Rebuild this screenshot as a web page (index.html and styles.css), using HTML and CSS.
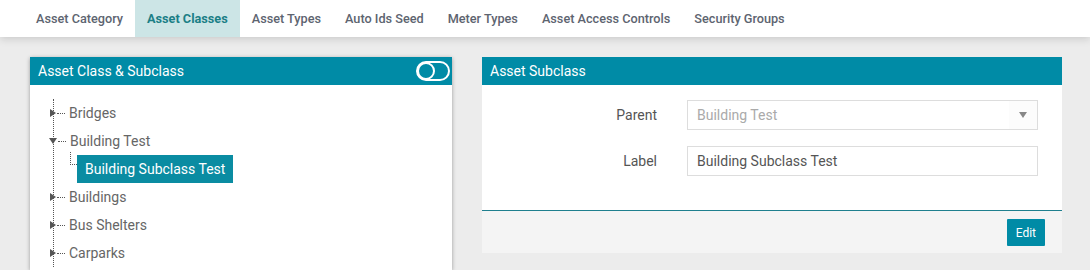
FILE: index.html
```html
<!DOCTYPE html>
<html>
  <head>
    <title>Asset Classes</title>
    <link rel="stylesheet" href="styles.css">
  </head>
  <body>
    <nav class="tabs">
      <a class="tab">Asset Category</a>
      <a class="tab active">Asset Classes</a>
      <a class="tab">Asset Types</a>
      <a class="tab">Auto Ids Seed</a>
      <a class="tab">Meter Types</a>
      <a class="tab">Asset Access Controls</a>
      <a class="tab">Security Groups</a>
    </nav>

    <div class="content">
      <div class="panel tree-panel">
        <div class="panel-head">
          <span>Asset Class &amp; Subclass</span>
          <svg class="toggle" width="34" height="20" viewBox="0 0 34 20">
            <rect x="1" y="1" width="32" height="18" rx="9" fill="none" stroke="#fff" stroke-width="2" />
            <circle cx="10" cy="10" r="8" fill="none" stroke="#fff" stroke-width="2" />
          </svg>
        </div>
        <div class="panel-body">
          <ul class="tree">
            <li><div class="node"><i class="arrow"></i><b class="dash"></b><span class="label">Bridges</span></div></li>
            <li>
              <div class="node"><i class="arrow open"></i><b class="dash"></b><span class="label">Building Test</span></div>
              <ul class="subtree">
                <li><div class="node"><b class="elbow"></b><span class="label selected">Building Subclass Test</span></div></li>
              </ul>
            </li>
            <li><div class="node"><i class="arrow"></i><b class="dash"></b><span class="label">Buildings</span></div></li>
            <li><div class="node"><i class="arrow"></i><b class="dash"></b><span class="label">Bus Shelters</span></div></li>
            <li><div class="node"><i class="arrow"></i><b class="dash"></b><span class="label">Carparks</span></div></li>
          </ul>
        </div>
      </div>

      <div class="panel form-panel">
        <div class="panel-head"><span>Asset Subclass</span></div>
        <div class="panel-body form-body">
          <label class="form-label">Parent</label>
          <div class="select disabled">
            <span>Building Test</span>
            <i class="caret"></i>
          </div>
          <label class="form-label">Label</label>
          <input class="form-input" type="text" value="Building Subclass Test" />
        </div>
        <div class="panel-foot">
          <button>Edit</button>
        </div>
      </div>
    </div>
  </body>
</html>
```

FILE: styles.css
```css
body {
  margin: 0;
  background-color: #ececec;
  font-family: Roboto, "Liberation Sans", sans-serif;
  color: #666;
}
.tabs {
  display: flex;
  height: 37px;
  padding-left: 24px;
  background-color: #fff;
  box-shadow: 0 2px 8px rgba(0, 0, 0, 0.15);
}
.tab {
  display: flex;
  align-items: center;
  padding: 0 12px;
  font-size: 12.7px;
  font-weight: 500;
  color: #5d6470;
}
.tab.active {
  background-color: #cce5e6;
  color: #1b7f86;
  font-weight: 700;
}
.content {
  display: flex;
  align-items: flex-start;
  gap: 30px;
  padding: 20px 0 0 30px;
}
.panel {
  background-color: #fff;
}
.tree-panel {
  width: 422px;
  height: 213px;
  box-shadow: 0 1px 4px rgba(0, 0, 0, 0.35);
}
.form-panel {
  width: 580px;
}
.panel-head {
  display: flex;
  align-items: center;
  justify-content: space-between;
  height: 28px;
  padding: 0 2px 0 8px;
  background-color: #008ba6;
  color: #fff;
  font-size: 14px;
}
.tree {
  list-style: none;
  margin: 14px 0 0 23px;
  padding: 0;
  border-left: 1px dotted #555;
}
.tree li {
  margin: 0;
}
.node {
  display: flex;
  align-items: center;
  height: 28px;
  font-size: 14px;
}
.arrow {
  width: 0;
  height: 0;
  margin-left: -4px;
  border-top: 4px solid transparent;
  border-bottom: 4px solid transparent;
  border-left: 6px solid #555;
}
.arrow.open {
  margin-left: -5px;
  border-left: 4px solid transparent;
  border-right: 4px solid transparent;
  border-top: 6px solid #555;
  border-bottom: 0;
}
.dash {
  width: 8px;
  margin-left: 1px;
  border-top: 1px dotted #555;
}
.label {
  padding-left: 4px;
  color: #666;
}
.subtree {
  list-style: none;
  margin: 0 0 0 16px;
  padding: 0;
}
.elbow {
  align-self: flex-start;
  width: 6px;
  height: 12px;
  margin-top: -3px;
  border-left: 1px dotted #555;
  border-bottom: 1px dotted #555;
}
.label.selected {
  display: flex;
  align-items: center;
  height: 28px;
  padding: 0 8px;
  background-color: #0a8ca2;
  color: #fff;
}
.form-body {
  display: grid;
  grid-template-columns: 175px 1fr;
  column-gap: 30px;
  row-gap: 16px;
  align-items: center;
  padding: 15px 24px 34px 0;
  border-bottom: 1px solid #1f7f8e;
}
.form-label {
  text-align: right;
  font-size: 14px;
  color: #555;
}
.select,
.form-input {
  box-sizing: border-box;
  height: 30px;
  border: 1px solid #ddd;
  font-family: inherit;
  font-size: 14px;
  color: #555;
}
.select {
  display: flex;
  align-items: center;
  justify-content: space-between;
  padding: 0 0 0 9px;
}
.select.disabled {
  color: #aaa;
}
.caret {
  display: flex;
  align-items: center;
  justify-content: center;
  width: 28px;
  height: 28px;
  background-color: #fcfcfc;
}
.caret::before {
  content: "";
  border-left: 4px solid transparent;
  border-right: 4px solid transparent;
  border-top: 6px solid #888;
}
.form-input {
  padding: 0 9px;
  outline: none;
}
.panel-foot {
  display: flex;
  justify-content: flex-end;
  padding: 8px 17px 7px 0;
  background-color: #f4f4f4;
}
button {
  height: 27px;
  padding: 0 9px;
  border: none;
  border-radius: 1px;
  background-color: #008ba6;
  color: #fff;
  font-family: inherit;
  font-size: 12px;
}
```
